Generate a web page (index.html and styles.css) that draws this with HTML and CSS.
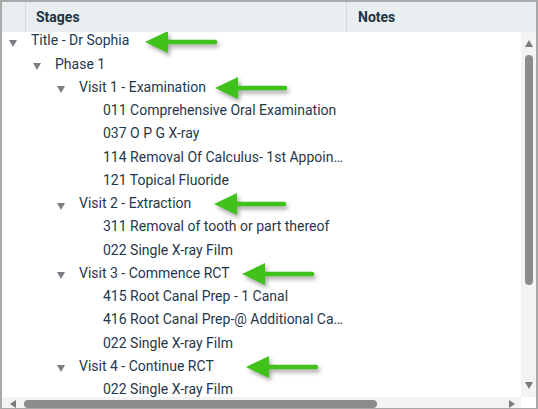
FILE: index.html
```html
<!DOCTYPE html>
<html lang="en">
<head>
  <meta charset="UTF-8">
  <title>Treatment Plan Stages</title>
  <link rel="stylesheet" href="styles.css">
</head>
<body>
  <svg class="defs" width="0" height="0">
    <symbol id="arrow" viewBox="0 0 76 26">
      <line x1="22" y1="12" x2="72" y2="12" stroke="#41c21b" stroke-width="4.5" stroke-linecap="round"/>
      <polygon points="2,12 25,1 25,23" fill="#41c21b"/>
    </symbol>
  </svg>

  <div class="grid">
    <div class="grid-head">
      <div class="head-cell head-select"></div>
      <div class="head-cell head-stages">Stages</div>
      <div class="head-cell head-notes">Notes</div>
    </div>

    <div class="grid-body">
      <div class="tree">
        <div class="row lvl-0"><span class="toggle open"></span><span class="label">Title - Dr Sophia</span><svg class="pointer at-title"><use href="#arrow"/></svg></div>
        <div class="row lvl-1"><span class="toggle open"></span><span class="label">Phase 1</span></div>
        <div class="row lvl-2"><span class="toggle open"></span><span class="label">Visit 1 - Examination</span><svg class="pointer at-visit1"><use href="#arrow"/></svg></div>
        <div class="row lvl-3"><span class="toggle"></span><span class="label">011 Comprehensive Oral Examination</span></div>
        <div class="row lvl-3"><span class="toggle"></span><span class="label">037 O P G X-ray</span></div>
        <div class="row lvl-3"><span class="toggle"></span><span class="label">114 Removal Of Calculus- 1st Appointment</span></div>
        <div class="row lvl-3"><span class="toggle"></span><span class="label">121 Topical Fluoride</span></div>
        <div class="row lvl-2"><span class="toggle open"></span><span class="label">Visit 2 - Extraction</span><svg class="pointer at-visit2"><use href="#arrow"/></svg></div>
        <div class="row lvl-3"><span class="toggle"></span><span class="label">311 Removal of tooth or part thereof</span></div>
        <div class="row lvl-3"><span class="toggle"></span><span class="label">022 Single X-ray Film</span></div>
        <div class="row lvl-2"><span class="toggle open"></span><span class="label">Visit 3 - Commence RCT</span><svg class="pointer at-visit3"><use href="#arrow"/></svg></div>
        <div class="row lvl-3"><span class="toggle"></span><span class="label">415 Root Canal Prep - 1 Canal</span></div>
        <div class="row lvl-3"><span class="toggle"></span><span class="label">416 Root Canal Prep-@ Additional Canal</span></div>
        <div class="row lvl-3"><span class="toggle"></span><span class="label">022 Single X-ray Film</span></div>
        <div class="row lvl-2"><span class="toggle open"></span><span class="label">Visit 4 - Continue RCT</span><svg class="pointer at-visit4"><use href="#arrow"/></svg></div>
        <div class="row lvl-3"><span class="toggle"></span><span class="label">022 Single X-ray Film</span></div>
      </div>

      <!-- vertical scrollbar -->
      <div class="vscroll">
        <span class="arrow-up"></span>
        <span class="vthumb"></span>
        <span class="arrow-down"></span>
      </div>
    </div>

    <!-- horizontal scrollbar -->
    <div class="hscroll">
      <div class="htrack">
        <span class="arrow-left"></span>
        <span class="hthumb"></span>
        <span class="arrow-right"></span>
      </div>
      <div class="corner"></div>
    </div>
  </div>
</body>
</html>
```

FILE: styles.css
```css
body {
  margin: 0;
  font-family: Roboto, "Liberation Sans", Arial, sans-serif;
  font-size: 14px;
  color: #1f374c;
  background: #fff;
}
.defs { position: absolute; }

.grid {
  width: 538px;
  height: 409px;
  box-sizing: border-box;
  border: 2px solid #a9a9a9;
  border-bottom-width: 1px;
  display: flex;
  flex-direction: column;
  overflow: hidden;
}

/* header */
.grid-head {
  display: flex;
  height: 30px;
  flex: none;
  background: #e9eef1;
}
.head-cell {
  display: flex;
  align-items: center;
  font-weight: bold;
  color: #1b3447;
  border-right: 1px solid #d3d8dc;
}
.head-select { width: 23px; }
.head-stages { width: 310px; padding-left: 10px; }
.head-notes { flex: 1; padding-left: 11px; border-right: none; }

/* body */
.grid-body {
  display: flex;
  flex: 1;
  min-height: 0;
}
.tree {
  flex: 1;
  overflow: hidden;
}
.row {
  display: flex;
  align-items: center;
  position: relative;
  width: 342px;
  height: 23.27px;
  box-sizing: border-box;
  white-space: nowrap;
}
.row:first-child { margin-top: -3.4px; }
.lvl-1 { padding-left: 24px; }
.lvl-2 { padding-left: 48px; }
.lvl-3 { padding-left: 72px; }
.toggle {
  flex: none;
  width: 29px;
  height: 7px;
  margin-top: 6px;
}
.toggle.open::before {
  content: "";
  display: block;
  margin-left: 7px;
  width: 0;
  height: 0;
  border-left: 4.5px solid transparent;
  border-right: 4.5px solid transparent;
  border-top: 7px solid #7b7f83;
}
.label {
  flex: 1;
  min-width: 0;
  overflow: hidden;
  text-overflow: ellipsis;
}

/* annotation arrows */
.pointer {
  position: absolute;
  top: 1px;
  width: 76px;
  height: 26px;
  overflow: visible;
  filter: drop-shadow(2px 3px 2px rgba(0, 0, 0, 0.35));
}
.at-title { left: 141px; }
.at-visit1 { left: 211px; }
.at-visit2 { left: 210px; }
.at-visit3 { left: 238px; }
.at-visit4 { left: 242px; }

/* scrollbars */
.vscroll {
  width: 15px;
  flex: none;
  background: #f3f3f3;
  display: flex;
  flex-direction: column;
  align-items: center;
}
.arrow-up {
  margin-top: 8px;
  border-left: 4.5px solid transparent;
  border-right: 4.5px solid transparent;
  border-bottom: 7px solid #7b7b7b;
}
.vthumb {
  margin-top: 8px;
  width: 8px;
  height: 230px;
  border-radius: 4px;
  background: #8c8c8c;
}
.arrow-down {
  margin-top: auto;
  margin-bottom: 8px;
  border-left: 4.5px solid transparent;
  border-right: 4.5px solid transparent;
  border-top: 7px solid #7b7b7b;
}
.hscroll {
  display: flex;
  height: 11px;
  flex: none;
}
.htrack {
  flex: 1;
  display: flex;
  align-items: center;
  background: #f3f3f3;
  padding-top: 3px;
}
.arrow-left {
  margin-left: 8px;
  border-top: 4px solid transparent;
  border-bottom: 4px solid transparent;
  border-right: 6px solid #7b7b7b;
}
.hthumb {
  margin-left: 8px;
  width: 353px;
  height: 8px;
  border-radius: 4px;
  background: #8c8c8c;
}
.arrow-right {
  margin-left: auto;
  margin-right: 6px;
  border-top: 4px solid transparent;
  border-bottom: 4px solid transparent;
  border-left: 6px solid #7b7b7b;
}
.corner { width: 15px; background: #fff; }
```
